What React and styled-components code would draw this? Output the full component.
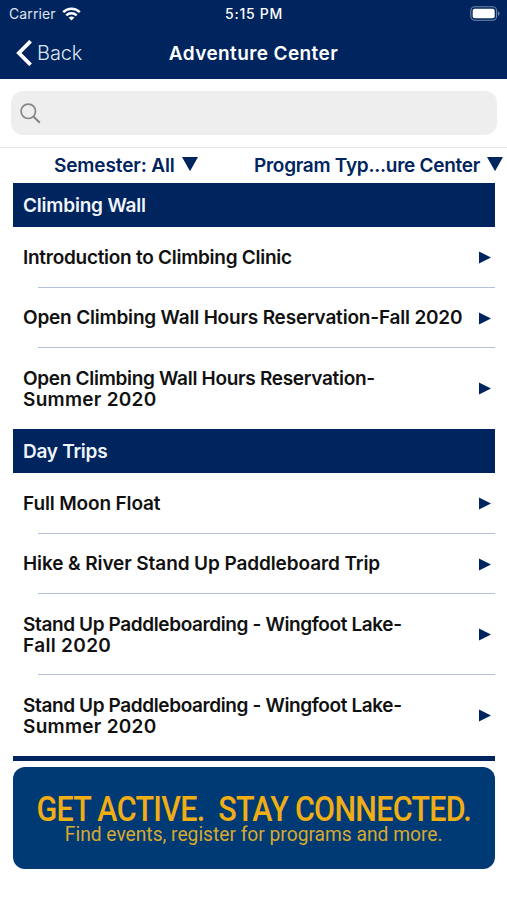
import React from 'react';
import styled, { createGlobalStyle } from 'styled-components';

const NAVY = '#00245d';

const GlobalStyle = createGlobalStyle`
  * { box-sizing: border-box; }
  html, body { margin: 0; background: #fff; }
  body { font-family: Inter, "Liberation Sans", sans-serif; overflow: hidden; }
`;

const Screen = styled.div`
  display: flex;
  flex-direction: column;
  width: 507px;
  height: 900px;
  overflow: hidden;
  background: #fff;
`;

const Header = styled.header`
  height: 79px;
  flex: none;
  background: ${NAVY};
  color: #fff;
`;

const StatusBar = styled.div`
  display: grid;
  grid-template-columns: 1fr auto 1fr;
  align-items: center;
  height: 27px;
  padding: 0 7px 0 9px;
  font-size: 14px;
  line-height: 17px;
`;

const Carrier = styled.div`
  display: flex;
  align-items: center;
  gap: 6px;
  color: #dfe6f1;
  letter-spacing: 0.1px;
`;

const Clock = styled.div`
  font-weight: 500;
  letter-spacing: 0.7px;
  margin-left: -1px;
`;

const BatterySlot = styled.div`
  display: flex;
  justify-content: flex-end;
`;

const NavBar = styled.div`
  display: grid;
  grid-template-columns: 1fr auto 1fr;
  align-items: center;
  height: 52px;
  padding: 0 16px;
`;

const BackButton = styled.button`
  display: flex;
  align-items: center;
  gap: 4px;
  padding: 0;
  border: 0;
  background: none;
  color: #dde5f2;
  font: 300 20px/26px Inter, sans-serif;
  letter-spacing: -0.1px;
`;

const Label = styled.span`
  display: block;
  letter-spacing: ${(p) => p.$track || 0}px;
  white-space: nowrap;
`;

const Title = styled.h1`
  margin: 0;
  padding-top: 1px;
  font-size: 19px;
  line-height: 26px;
  font-weight: 600;
`;

const SearchArea = styled.div`
  flex: none;
  height: 69px;
  padding: 12px 10px 0 11px;
  border-bottom: 1px solid #e6e6e6;
`;

const SearchField = styled.div`
  display: flex;
  align-items: center;
  height: 44px;
  padding-left: 9px;
  border-radius: 12px;
  background: #eee;
`;

const Filters = styled.div`
  display: grid;
  grid-template-columns: 200px 1fr;
  flex: none;
  height: 35px;
  padding-left: 54px;
`;

const Filter = styled.div`
  display: flex;
  align-items: center;
  gap: 7px;
  height: 34px;
  color: ${NAVY};
  font-size: 19px;
  font-weight: 600;
`;

const List = styled.main`
  flex: none;
  width: 482px;
  margin-left: 13px;
  border-bottom: 5px solid ${NAVY};
`;

const SectionHeader = styled.h2`
  display: flex;
  align-items: center;
  height: 44px;
  margin: 0;
  padding-left: 10px;
  background: ${NAVY};
  color: #f1f5fb;
  font-size: 19px;
  font-weight: 600;
`;

const Row = styled.div`
  display: flex;
  align-items: center;
  justify-content: space-between;
  height: ${(p) => p.$height}px;
  padding: 0 4px 0 10px;
  color: #111;
  font-size: 19px;
  line-height: 21px;
  font-weight: 600;
  background: ${(p) =>
    p.$last ? 'none' : 'linear-gradient(#b4bfd9, #b4bfd9) 25px 100% / 100% 1.5px no-repeat'};
`;

const RowText = styled.div`
  padding-top: ${(p) => (p.$multiline ? 1 : 0)}px;
  padding-bottom: ${(p) => (p.$multiline ? 0 : 1)}px;
`;

const Banner = styled.footer`
  display: flex;
  flex-direction: column;
  align-items: center;
  flex: none;
  width: 482px;
  height: 102px;
  margin: 6px 0 0 13px;
  padding-top: 26px;
  border-radius: 12px;
  background: #003a75;
  color: #f0ae14;
  font-family: Roboto, "Liberation Sans", sans-serif;
  white-space: pre;
`;

const Headline = styled.div`
  font-size: 35px;
  line-height: 33px;
  font-weight: 500;
  letter-spacing: -0.8px;
  transform: scaleX(0.87);
`;

const Tagline = styled.div`
  margin-top: -2px;
  font-size: 20px;
  line-height: 20px;
  color: #d8a92f;
  transform: scaleX(0.96);
`;

const WifiIcon = () => (
  <svg width="19" height="14" viewBox="0 0 19 14" fill="none" stroke="#fff" strokeWidth="2.5">
    <path d="M1.2 5.2C5.8.6 13.2.6 17.8 5.2" />
    <path d="M4.3 8.4c2.9-2.8 7.5-2.8 10.4 0" />
    <path d="M9.5 13.5 6.6 10.6c1.7-1.5 4.1-1.5 5.8 0z" fill="#fff" stroke="none" />
  </svg>
);

const BatteryIcon = () => (
  <svg width="30" height="15" viewBox="0 0 30 15">
    <rect x=".8" y=".8" width="25.8" height="13.4" rx="4" fill="none" stroke="#7286a9" strokeWidth="1.1" />
    <rect x="2.7" y="2.7" width="22" height="9.6" rx="2" fill="#fff" />
    <path d="M28 5.2c2 .8 2 3.8 0 4.6z" fill="#7286a9" />
  </svg>
);

const BackIcon = () => (
  <svg width="17" height="26" viewBox="0 0 17 26" fill="none" stroke="#fff" strokeWidth="3.8">
    <path d="M14.6 1.2 2.9 13l11.7 11.8" />
  </svg>
);

const SearchIcon = () => (
  <svg width="21" height="21" viewBox="0 0 21 21" fill="none" stroke="#858585" strokeWidth="1.7">
    <circle cx="8.3" cy="8.3" r="7.2" />
    <path d="m13.4 13.4 6.4 6.4" strokeWidth="2.1" />
  </svg>
);

const DownIcon = () => (
  <svg width="16" height="16" viewBox="0 0 16 16">
    <path d="M0 0h16L8 14.2z" fill={NAVY} />
  </svg>
);

const RightIcon = () => (
  <svg width="12" height="13" viewBox="0 0 12 13">
    <path d="M0 .5 12 6.5 0 12.5z" fill={NAVY} />
  </svg>
);

const sections = [
  {
    title: 'Climbing Wall',
    track: -0.2,
    rows: [
      { height: 61, lines: [['Introduction to Climbing Clinic', -0.27]] },
      { height: 60, lines: [['Open Climbing Wall Hours Reservation-Fall 2020', -0.19]] },
      { height: 81, lines: [['Open Climbing Wall Hours Reservation-', -0.3], ['Summer 2020', 0.27]] },
    ],
  },
  {
    title: 'Day Trips',
    track: -0.27,
    rows: [
      { height: 61, lines: [['Full Moon Float', -0.14]] },
      { height: 60, lines: [['Hike & River Stand Up Paddleboard Trip', -0.1]] },
      { height: 81, lines: [['Stand Up Paddleboarding - Wingfoot Lake-', -0.38], ['Fall 2020', 0.33]] },
      { height: 81, lines: [['Stand Up Paddleboarding - Wingfoot Lake-', -0.38], ['Summer 2020', 0.27]] },
    ],
  },
];

export default function App() {
  return (
    <>
      <GlobalStyle />
      <Screen>
        <Header>
          <StatusBar>
            <Carrier>Carrier <WifiIcon /></Carrier>
            <Clock>5:15 PM</Clock>
            <BatterySlot><BatteryIcon /></BatterySlot>
          </StatusBar>
          <NavBar>
            <BackButton><BackIcon />Back</BackButton>
            <Title><Label $track={0.4}>Adventure Center</Label></Title>
          </NavBar>
        </Header>
        <SearchArea>
          <SearchField><SearchIcon /></SearchField>
        </SearchArea>
        <Filters>
          <Filter><Label $track={-0.12}>Semester: All</Label><DownIcon /></Filter>
          <Filter><Label $track={-0.27}>Program Typ...ure Center</Label><DownIcon /></Filter>
        </Filters>
        <List>
          {sections.map((s) => (
            <section key={s.title}>
              <SectionHeader><Label $track={s.track}>{s.title}</Label></SectionHeader>
              {s.rows.map((r, i) => (
                <Row key={i} $height={r.height} $last={i === s.rows.length - 1}>
                  <RowText $multiline={r.lines.length > 1}>
                    {r.lines.map(([text, track]) => (
                      <Label key={text} $track={track}>{text}</Label>
                    ))}
                  </RowText>
                  <RightIcon />
                </Row>
              ))}
            </section>
          ))}
        </List>
        <Banner>
          <Headline>GET ACTIVE.  STAY CONNECTED.</Headline>
          <Tagline>Find events, register for programs and more.</Tagline>
        </Banner>
      </Screen>
    </>
  );
}
